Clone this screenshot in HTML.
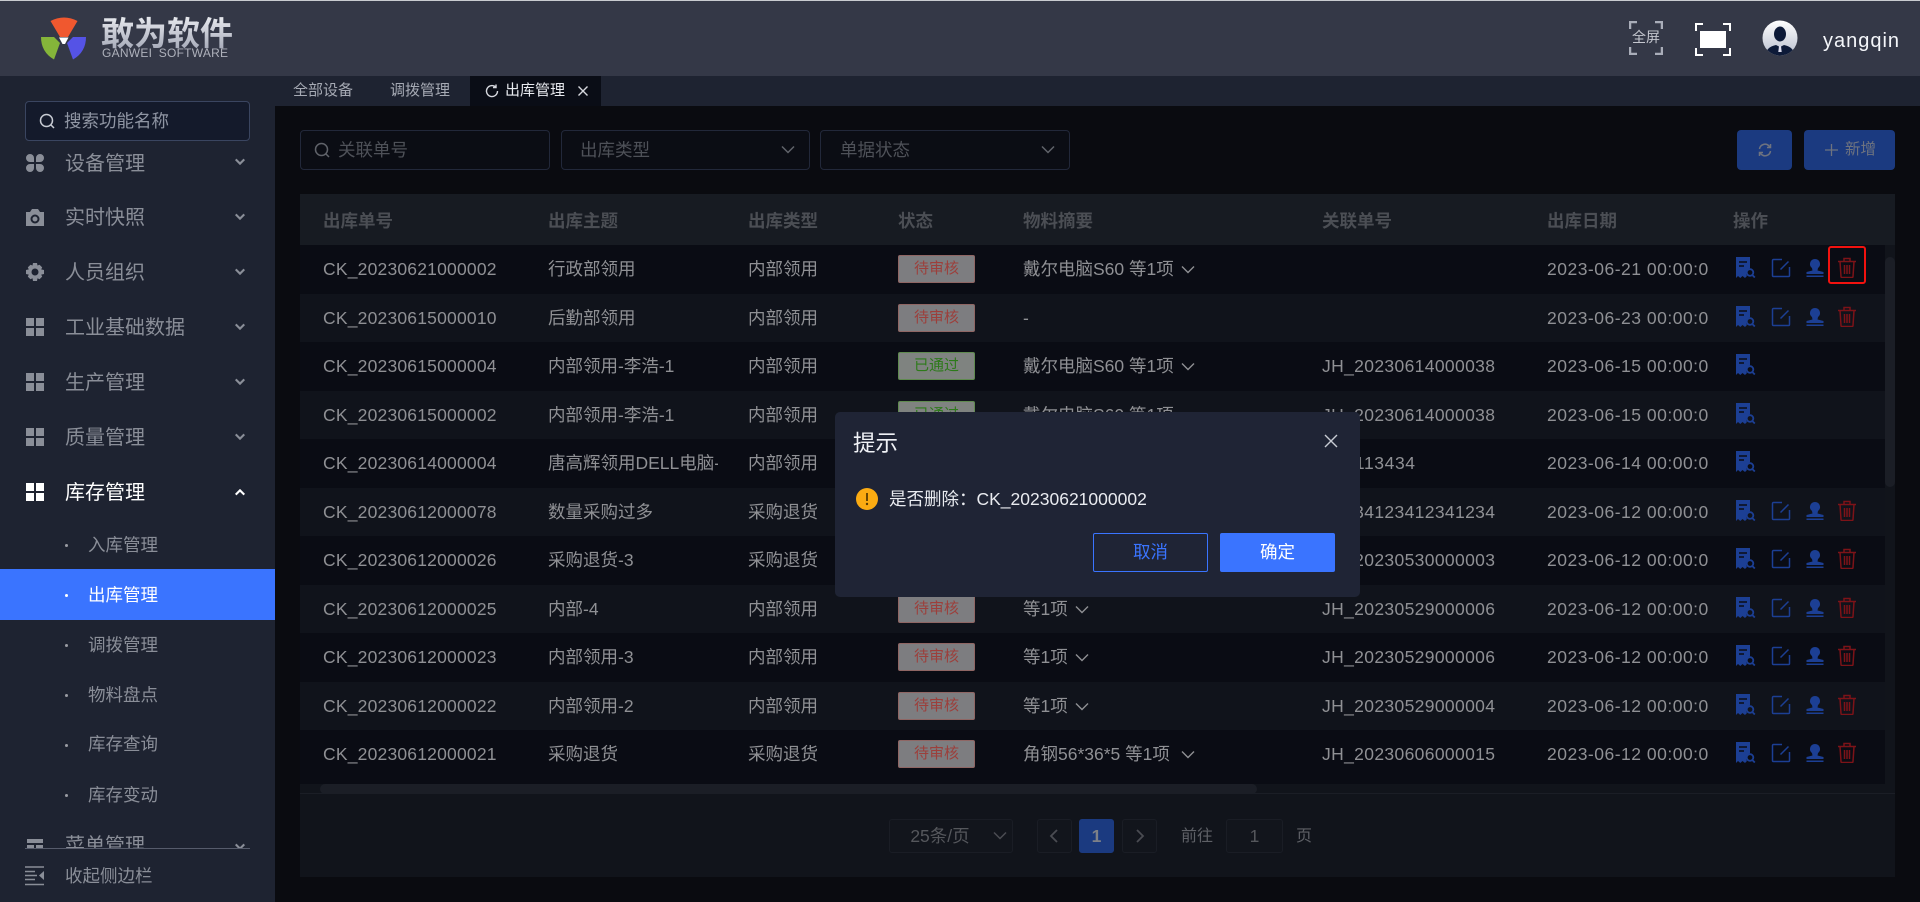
<!DOCTYPE html>
<html lang="zh"><head><meta charset="utf-8"><title>出库管理</title>
<style>
*{box-sizing:border-box;margin:0;padding:0}
html,body{width:1920px;height:902px;overflow:hidden;background:#0a0b10}
body{position:relative;font-family:"Liberation Sans","Noto Sans CJK SC",sans-serif;font-size:17.5px;color:#8f9094}
.a{position:absolute;white-space:nowrap}
.hd{left:0;top:0;width:1920px;height:76px;background:#343847;border-top:1px solid #c9cbd0}
.sb{left:0;top:76px;width:275px;height:826px;background:#1e2331}
.tabs{left:275px;top:76px;width:1645px;height:30px;background:#1e2331}
.tab{top:76px;height:30px;line-height:30px;font-size:15px;color:#a6aab4}
.mi{left:65px;font-size:20px;line-height:30px;color:#8a8e98;height:30px}
.si{left:88px;font-size:17.5px;line-height:26px;height:26px;color:#8a8e98}
.dot{left:65px;width:3px;height:3px;border-radius:50%;background:#9a9ca3}
.ic{left:26px;width:18px;height:18px;fill:#8a8e98}
.ch{left:235px;width:10px;height:7px;fill:none;stroke:#8a8e98;stroke-width:3}
.ipt{top:130px;height:40px;border:1px solid #22283a;border-radius:4px;background:#0b0d14;color:#4e5158;line-height:38px;padding-left:18px}
.btn{top:130px;height:40px;background:#1b3a80;border-radius:4px}
.panel{left:300px;top:194px;width:1595px;height:683px;background:#11141b}
.th{top:197px;height:49px;line-height:49px;font-weight:bold;color:#4b4e54;font-size:17.5px}
.r{position:absolute;left:300px;width:1585px;height:48.5px;overflow:hidden}
.r.o{background:#0a0c14}.r.e{background:#10131b}
.r span{position:absolute;top:0;line-height:48px;white-space:nowrap}
.c1{left:23px;letter-spacing:.2px}.c2{left:248px;width:170px;overflow:hidden}.c3{left:448px}
.r span.tg{left:598px;top:10px;width:77px;height:28px;line-height:25px;text-align:center;font-size:15px;border-radius:2px;border:1px solid}
.p{background:#7d7d80;color:#9c3f3b;border-color:#8f6664!important}
.g{background:#7f8380;color:#2d7a1a;border-color:#5f8a4f!important}
.c5{left:723px}.c6{left:1022px;letter-spacing:.35px}.c7{left:1247px;width:165px;overflow:hidden;letter-spacing:.5px}
.r svg{position:absolute}
.v{width:14px;height:9px;fill:none;stroke:#8f9094;stroke-width:1.4;top:20px}
.i1,.i2,.i3,.i4{top:12px;width:20px;height:21px}
.i1{left:1436px;fill:#1c3f94}.i2{left:1471px;fill:none;stroke:#1c3f94;stroke-width:1.5}
.i3{left:1505px;fill:#1c3f94}.i4{left:1537px;fill:none;stroke:#7d1318;stroke-width:1.5}
.pg{top:819px;height:34px;border:1px solid #1a1d25;border-radius:3px;background:#12151c;text-align:center;line-height:33px;color:#55575c}
</style></head><body>
<svg width="0" height="0" style="position:absolute"><defs>
<symbol id="doc" viewBox="0 0 20 21"><path d="M0 0h14v11.2a5 5 0 0 0-3 7.8l-2 2-2.500-2-2.200 2-2.300-2-2 2z"/><path d="M3 5h8M3 9h5" stroke="#0b0d14" stroke-width="1.500" fill="none"/><circle cx="14" cy="15.500" r="3.300" fill="none" stroke="#1c3f94" stroke-width="1.800"/><path d="M16.300 18l2.500 2.500" stroke="#1c3f94" stroke-width="1.800"/></symbol>
<symbol id="edt" viewBox="0 0 20 21"><path d="M18.500 10v8.500a1 1 0 0 1-1 1H2.500a1 1 0 0 1-1-1V3.500a1 1 0 0 1 1-1H11M17.500 4.500 9.500 12.500"/></symbol>
<symbol id="stp" viewBox="0 0 20 21"><path d="M10 2a5 5 0 0 1 3 9l-.500 2.500 6 1.500v2H1.500v-2l6-1.500L7 11a5 5 0 0 1 3-9zM1.500 18.500h17V20h-17z"/></symbol>
<symbol id="trs" viewBox="0 0 20 21"><path d="M1 4.500h18M7 4.500V1.500h6v3M3 4.500l1 15a1 1 0 0 0 1 1h10a1 1 0 0 0 1-1l1-15M7.500 8v9M10 8v9M12.500 8v9"/></symbol>
<symbol id="dn" viewBox="0 0 14 9"><path d="M1 1.500 7 7.500l6-6"/></symbol>
<symbol id="grid" viewBox="0 0 18 18"><path d="M0 0h8v8H0zM10 0h8v8h-8zM0 10h8v8H0zM10 10h8v8h-8z"/></symbol>
</defs></svg>

<div class="a hd"></div>
<svg class="a" style="left:40px;top:16px" width="48" height="46" viewBox="0 0 48 46">
<path d="M10.500 5Q24-2 37.500 5L28 21H20z" fill="#f0582f"/>
<path d="M1 21H14L20 27 14 43.500Q1 36 1 21z" fill="#85b53a"/>
<path d="M46 21H33L27 27 33 43.500Q46 36 46 21z" fill="#5553e6"/>
<path d="M19 21.500h9.500l-3.500 6.500h-2.500z" fill="#fff"/>
</svg>
<div class="a" style="left:101px;top:14px;font-size:33px;line-height:40px;font-weight:bold;background:linear-gradient(#eceef2,#9ea2b2);-webkit-background-clip:text;background-clip:text;color:transparent">敢为软件</div>
<div class="a" style="left:102px;top:47px;font-size:12px;line-height:13px;letter-spacing:.25px;color:#aeb1bb;word-spacing:3px">GANWEI SOFTWARE</div>

<svg class="a" style="left:1629px;top:21px" width="34" height="34" fill="none" stroke="#a9adb9" stroke-width="2.500"><path d="M1 8V1h7M26 1h7v7M1 26v7h7M33 26v7h-7"/></svg>
<div class="a" style="left:1632px;top:27px;font-size:14px;line-height:20px;color:#c5c7cf">全屏</div>
<svg class="a" style="left:1695px;top:23px" width="36" height="33" fill="none" stroke="#fff" stroke-width="2"><path d="M1 8V1h7M28 1h7v7M1 25v7h7M35 25v7h-7"/><rect x="5" y="8" width="26" height="17" fill="#fff" stroke="none"/></svg>
<svg class="a" style="left:1762px;top:20px" width="36" height="36" viewBox="0 0 36 36"><defs><linearGradient id="av" x1="0" y1="0" x2="0" y2="1"><stop offset="0" stop-color="#fff"/><stop offset="1" stop-color="#b9bfcf"/></linearGradient><clipPath id="cc"><circle cx="18" cy="18" r="17.500"/></clipPath></defs><circle cx="18" cy="18" r="17.500" fill="url(#av)"/><g clip-path="url(#cc)"><ellipse cx="18" cy="14" rx="6" ry="7.500" fill="#0d1a38"/><path d="M3 36q1-9 11-11l4 2 4-2q10 2 11 11z" fill="#0d1a38"/><path d="M17 26h2l.7 6h-3.400z" fill="#dde"/></g></svg>
<div class="a" style="left:1823px;top:28px;font-size:20px;line-height:26px;color:#f4f6fa;letter-spacing:1px">yangqin</div>

<div class="a sb"></div>
<div class="a" style="left:25px;top:101px;width:225px;height:40px;border:1px solid #3a4560;border-radius:4px;background:#141a2b;line-height:38px;padding-left:38px;font-size:17.5px;color:#8f95a3">搜索功能名称</div>
<svg class="a" style="left:39px;top:113px" width="16" height="16" fill="none" stroke="#c8ccd4" stroke-width="1.500"><circle cx="7.500" cy="7.500" r="6"/><path d="M12 12l3 3"/></svg>

<svg class="a ic" style="top:154px" viewBox="0 0 18 18"><path d="M0 4a4 4 0 0 1 8 0v4H4a4 4 0 0 1-4-4zM10 4a4 4 0 1 1 4 4h-4zM0 14a4 4 0 0 1 4-4h4v4a4 4 0 0 1-8 0zM10 10h4a4 4 0 1 1-4 4z"/></svg>
<div class="a mi" style="top:149px">设备管理</div><svg class="a ch" style="top:158px"><use href="#dn"/></svg>
<svg class="a ic" style="top:208px" viewBox="0 0 18 18"><path fill-rule="evenodd" d="M0 4h4l2-3h6l2 3h4v14H0zM9 6.500a4.500 4.500 0 1 0 0 9 4.500 4.500 0 0 0 0-9zm0 2a2.500 2.500 0 1 1 0 5 2.500 2.500 0 0 1 0-5z"/></svg>
<div class="a mi" style="top:203px">实时快照</div><svg class="a ch" style="top:213px"><use href="#dn"/></svg>
<svg class="a ic" style="top:263px" viewBox="0 0 18 18"><path fill-rule="evenodd" d="M7 0h4l.500 2.500 2-.800 2.700 2.700-1 2 2.800.600v4l-2.800.600 1 2-2.700 2.700-2-1L11 18H7l-.500-2.700-2 1L1.800 13.600l1-2L0 11V7l2.800-.600-1-2 2.700-2.700 2 .800zM9 5.500a3.500 3.500 0 1 0 0 7 3.500 3.500 0 0 0 0-7z"/></svg>
<div class="a mi" style="top:258px">人员组织</div><svg class="a ch" style="top:268px"><use href="#dn"/></svg>
<svg class="a ic" style="top:318px"><use href="#grid"/></svg>
<div class="a mi" style="top:313px">工业基础数据</div><svg class="a ch" style="top:323px"><use href="#dn"/></svg>
<svg class="a ic" style="top:373px"><use href="#grid"/></svg>
<div class="a mi" style="top:368px">生产管理</div><svg class="a ch" style="top:378px"><use href="#dn"/></svg>
<svg class="a ic" style="top:428px"><use href="#grid"/></svg>
<div class="a mi" style="top:423px">质量管理</div><svg class="a ch" style="top:433px"><use href="#dn"/></svg>
<svg class="a ic" style="top:483px;fill:#fff"><use href="#grid"/></svg>
<div class="a mi" style="top:478px;color:#fff">库存管理</div><svg class="a ch" style="top:489px;stroke:#fff;transform:rotate(180deg)"><use href="#dn"/></svg>

<div class="a" style="left:0;top:569px;width:275px;height:51px;background:#3a74ff"></div>
<div class="a dot" style="top:544px"></div><div class="a si" style="top:532px">入库管理</div>
<div class="a dot" style="top:594px;background:#fff"></div><div class="a si" style="top:582px;color:#fff">出库管理</div>
<div class="a dot" style="top:644px"></div><div class="a si" style="top:632px">调拨管理</div>
<div class="a dot" style="top:694px"></div><div class="a si" style="top:682px">物料盘点</div>
<div class="a dot" style="top:744px"></div><div class="a si" style="top:731px">库存查询</div>
<div class="a dot" style="top:794px"></div><div class="a si" style="top:782px">库存变动</div>
<div class="a" style="left:0;top:830px;width:275px;height:18px;overflow:hidden">
<svg class="a ic" style="top:9px;left:27px" viewBox="0 0 18 18"><path d="M0 0h16v4H0zM0 6h7v10H0zM9 6h7v10H9z"/></svg>
<div class="a mi" style="top:1px">菜单管理</div><svg class="a ch" style="top:13px"><use href="#dn"/></svg></div>
<div class="a" style="left:25px;top:848px;width:225px;height:1px;background:#565b6b"></div>
<svg class="a" style="left:25px;top:866px" width="20" height="20" fill="none" stroke="#8a8e98" stroke-width="1.500"><path d="M0 1h19M0 9.500h12M0 18.500h19M0 5.500h10M0 13.500h10"/><path d="M19 5v9l-5-4.500z" fill="#8a8e98" stroke="none"/></svg>
<div class="a mi" style="top:861px;font-size:17.5px">收起侧边栏</div>

<div class="a tabs"></div>
<div class="a tab" style="left:293px">全部设备</div>
<div class="a tab" style="left:390px">调拨管理</div>
<div class="a" style="left:470px;top:76px;width:131px;height:30px;background:#0a0d16"></div>
<svg class="a" style="left:485px;top:84px" width="14" height="14" fill="none" stroke="#d6d8de" stroke-width="1.400"><path d="M12.500 7a5.500 5.500 0 1 1-1.800-4"/><path d="M11 .5V3.500H8"/></svg>
<div class="a tab" style="left:505px;color:#e8eaef">出库管理</div>
<svg class="a" style="left:577px;top:85px" width="12" height="12" stroke="#d6d8de" stroke-width="1.400"><path d="M1.500 1.500l9 9M10.500 1.500l-9 9"/></svg>

<div class="a ipt" style="left:300px;width:250px;padding-left:37px">关联单号</div>
<svg class="a" style="left:314px;top:142px" width="16" height="16" fill="none" stroke="#60636a" stroke-width="1.500"><circle cx="7.500" cy="7.500" r="6"/><path d="M12 12l3 3"/></svg>
<div class="a ipt" style="left:561px;width:249px">出库类型</div>
<svg class="a" style="left:781px;top:145px;stroke:#60636a;fill:none;stroke-width:1.500" width="14" height="9"><use href="#dn"/></svg>
<div class="a ipt" style="left:820px;width:250px;padding-left:19px">单据状态</div>
<svg class="a" style="left:1041px;top:145px;stroke:#60636a;fill:none;stroke-width:1.500" width="14" height="9"><use href="#dn"/></svg>
<div class="a btn" style="left:1737px;width:55px"></div>
<svg class="a" style="left:1758px;top:143px" width="14" height="14" fill="none" stroke="#6e737f" stroke-width="1.500"><path d="M1.500 6A5.500 5.500 0 0 1 11 3l1.500 1.500M12.500 8A5.500 5.500 0 0 1 3 11l-1.500-1.500M12.500 1v3.500H9M1.500 13V9.500H5"/></svg>
<div class="a btn" style="left:1804px;width:91px"></div>
<svg class="a" style="left:1825px;top:143px" width="13" height="14" stroke="#6e737f" stroke-width="1.300"><path d="M6.500 1v12M0 7h13"/></svg>
<div class="a" style="left:1845px;top:130px;line-height:40px;font-size:15.500px;color:#6e737f">新增</div>

<div class="a panel"></div>
<div class="a" style="left:300px;top:194px;width:1595px;height:51px;background:#171b22"></div>
<div class="a th" style="left:323px">出库单号</div><div class="a th" style="left:548px">出库主题</div><div class="a th" style="left:748px">出库类型</div><div class="a th" style="left:898px">状态</div><div class="a th" style="left:1023px">物料摘要</div><div class="a th" style="left:1322px">关联单号</div><div class="a th" style="left:1547px">出库日期</div><div class="a th" style="left:1733px">操作</div>

<div class="r o" style="top:245px"><span class="c1">CK_20230621000002</span><span class="c2">行政部领用</span><span class="c3">内部领用</span><span class="tg p">待审核</span><span class="c5">戴尔电脑S60 等1项</span><svg class="v" style="left:881px"><use href="#dn"/></svg><span class="c7">2023-06-21 00:00:0</span><svg class="i1"><use href="#doc"/></svg><svg class="i2"><use href="#edt"/></svg><svg class="i3"><use href="#stp"/></svg><svg class="i4"><use href="#trs"/></svg></div>
<div class="r e" style="top:293.500px"><span class="c1">CK_20230615000010</span><span class="c2">后勤部领用</span><span class="c3">内部领用</span><span class="tg p">待审核</span><span class="c5">-</span><span class="c7">2023-06-23 00:00:0</span><svg class="i1"><use href="#doc"/></svg><svg class="i2"><use href="#edt"/></svg><svg class="i3"><use href="#stp"/></svg><svg class="i4"><use href="#trs"/></svg></div>
<div class="r o" style="top:342px"><span class="c1">CK_20230615000004</span><span class="c2">内部领用-李浩-1</span><span class="c3">内部领用</span><span class="tg g">已通过</span><span class="c5">戴尔电脑S60 等1项</span><svg class="v" style="left:881px"><use href="#dn"/></svg><span class="c6">JH_20230614000038</span><span class="c7">2023-06-15 00:00:0</span><svg class="i1"><use href="#doc"/></svg></div>
<div class="r e" style="top:390.500px"><span class="c1">CK_20230615000002</span><span class="c2">内部领用-李浩-1</span><span class="c3">内部领用</span><span class="tg g">已通过</span><span class="c5">戴尔电脑S60 等1项</span><svg class="v" style="left:881px"><use href="#dn"/></svg><span class="c6">JH_20230614000038</span><span class="c7">2023-06-15 00:00:0</span><svg class="i1"><use href="#doc"/></svg></div>
<div class="r o" style="top:439px"><span class="c1">CK_20230614000004</span><span class="c2">唐高辉领用DELL电脑-</span><span class="c3">内部领用</span><span class="tg g">已通过</span><span class="c5">戴尔电脑S60 等1项</span><span class="c6" style="letter-spacing:.6px">JH_113434</span><span class="c7">2023-06-14 00:00:0</span><svg class="i1"><use href="#doc"/></svg></div>
<div class="r e" style="top:487.500px"><span class="c1">CK_20230612000078</span><span class="c2">数量采购过多</span><span class="c3">采购退货</span><span class="tg p">待审核</span><span class="c5">等1项</span><span class="c6">JH_34123412341234</span><span class="c7">2023-06-12 00:00:0</span><svg class="i1"><use href="#doc"/></svg><svg class="i2"><use href="#edt"/></svg><svg class="i3"><use href="#stp"/></svg><svg class="i4"><use href="#trs"/></svg></div>
<div class="r o" style="top:536px"><span class="c1">CK_20230612000026</span><span class="c2">采购退货-3</span><span class="c3">采购退货</span><span class="tg p">待审核</span><span class="c5">等1项</span><span class="c6">JH_20230530000003</span><span class="c7">2023-06-12 00:00:0</span><svg class="i1"><use href="#doc"/></svg><svg class="i2"><use href="#edt"/></svg><svg class="i3"><use href="#stp"/></svg><svg class="i4"><use href="#trs"/></svg></div>
<div class="r e" style="top:584.500px"><span class="c1">CK_20230612000025</span><span class="c2">内部-4</span><span class="c3">内部领用</span><span class="tg p">待审核</span><span class="c5">等1项</span><svg class="v" style="left:775px"><use href="#dn"/></svg><span class="c6">JH_20230529000006</span><span class="c7">2023-06-12 00:00:0</span><svg class="i1"><use href="#doc"/></svg><svg class="i2"><use href="#edt"/></svg><svg class="i3"><use href="#stp"/></svg><svg class="i4"><use href="#trs"/></svg></div>
<div class="r o" style="top:633px"><span class="c1">CK_20230612000023</span><span class="c2">内部领用-3</span><span class="c3">内部领用</span><span class="tg p">待审核</span><span class="c5">等1项</span><svg class="v" style="left:775px"><use href="#dn"/></svg><span class="c6">JH_20230529000006</span><span class="c7">2023-06-12 00:00:0</span><svg class="i1"><use href="#doc"/></svg><svg class="i2"><use href="#edt"/></svg><svg class="i3"><use href="#stp"/></svg><svg class="i4"><use href="#trs"/></svg></div>
<div class="r e" style="top:681.500px"><span class="c1">CK_20230612000022</span><span class="c2">内部领用-2</span><span class="c3">内部领用</span><span class="tg p">待审核</span><span class="c5">等1项</span><svg class="v" style="left:775px"><use href="#dn"/></svg><span class="c6">JH_20230529000004</span><span class="c7">2023-06-12 00:00:0</span><svg class="i1"><use href="#doc"/></svg><svg class="i2"><use href="#edt"/></svg><svg class="i3"><use href="#stp"/></svg><svg class="i4"><use href="#trs"/></svg></div>
<div class="r o" style="top:730px;height:54px"><span class="c1">CK_20230612000021</span><span class="c2">采购退货</span><span class="c3">采购退货</span><span class="tg p">待审核</span><span class="c5">角钢56*36*5 等1项</span><svg class="v" style="left:881px"><use href="#dn"/></svg><span class="c6">JH_20230606000015</span><span class="c7">2023-06-12 00:00:0</span><svg class="i1"><use href="#doc"/></svg><svg class="i2"><use href="#edt"/></svg><svg class="i3"><use href="#stp"/></svg><svg class="i4"><use href="#trs"/></svg></div>

<div class="a" style="left:1885px;top:245px;width:10px;height:549px;background:#11141b"></div>
<div class="a" style="left:1885px;top:257px;width:10px;height:230px;background:#1b1e26;border-radius:5px"></div>
<div class="a" style="left:300px;top:784px;width:1595px;height:10px;background:#11141b;border-bottom:1px solid #1b1e26"></div>
<div class="a" style="left:320px;top:784px;width:937px;height:10px;background:#1b1e26;border-radius:5px"></div>

<div class="a pg" style="left:889px;width:124px;padding-right:22px;font-size:17.500px">25条/页</div>
<svg class="a" style="left:993px;top:831px;stroke:#4a4c52;fill:none;stroke-width:1.500" width="14" height="9"><use href="#dn"/></svg>
<div class="a pg" style="left:1037px;width:35px"></div><svg class="a" style="left:1049px;top:829px" width="10" height="14" fill="none" stroke="#4a4c52" stroke-width="1.800"><path d="M8 1 2 7l6 6"/></svg>
<div class="a pg" style="left:1079px;width:35px;background:#1b3a80;border-color:#1b3a80;color:#7d8088;font-weight:bold;font-size:17.500px">1</div>
<div class="a pg" style="left:1122px;width:35px"></div><svg class="a" style="left:1135px;top:829px" width="10" height="14" fill="none" stroke="#4a4c52" stroke-width="1.800"><path d="M2 1l6 6-6 6"/></svg>
<div class="a" style="left:1181px;top:820px;line-height:34px;font-size:16px;color:#5e6066">前往</div>
<div class="a pg" style="left:1226px;width:57px;font-size:17.500px">1</div>
<div class="a" style="left:1296px;top:820px;line-height:34px;font-size:16px;color:#5e6066">页</div>

<div class="a" style="left:1828px;top:246px;width:38px;height:38px;border:2.500px solid #f2120f;border-radius:3px"></div>

<div class="a" style="left:835px;top:412px;width:525px;height:185px;background:#1f2435;border-radius:5px"></div>
<div class="a" style="left:853px;top:429px;font-size:22.500px;line-height:30px;color:#f0f2f6">提示</div>
<svg class="a" style="left:1324px;top:434px" width="14" height="14" stroke="#c8ccd4" stroke-width="1.400"><path d="M1 1l12 12M13 1 1 13"/></svg>
<svg class="a" style="left:856px;top:488px" width="22" height="22"><circle cx="11" cy="11" r="11" fill="#fbab12"/><path d="M11 5v8" stroke="#5a3c00" stroke-width="1.800"/><circle cx="11" cy="16" r="1.200" fill="#5a3c00"/></svg>
<div class="a" style="left:889px;top:486px;font-size:17.500px;line-height:26px;color:#e9ebf0">是否删除：<span>CK_20230621000002</span></div>
<div class="a" style="left:1093px;top:533px;width:115px;height:39px;border:1px solid #3a74ff;border-radius:2px;text-align:center;line-height:37px;font-size:17.500px;color:#3a74ff">取消</div>
<div class="a" style="left:1220px;top:533px;width:115px;height:39px;background:#3a74ff;border-radius:2px;text-align:center;line-height:39px;font-size:17.500px;color:#fff">确定</div>
</body></html>
